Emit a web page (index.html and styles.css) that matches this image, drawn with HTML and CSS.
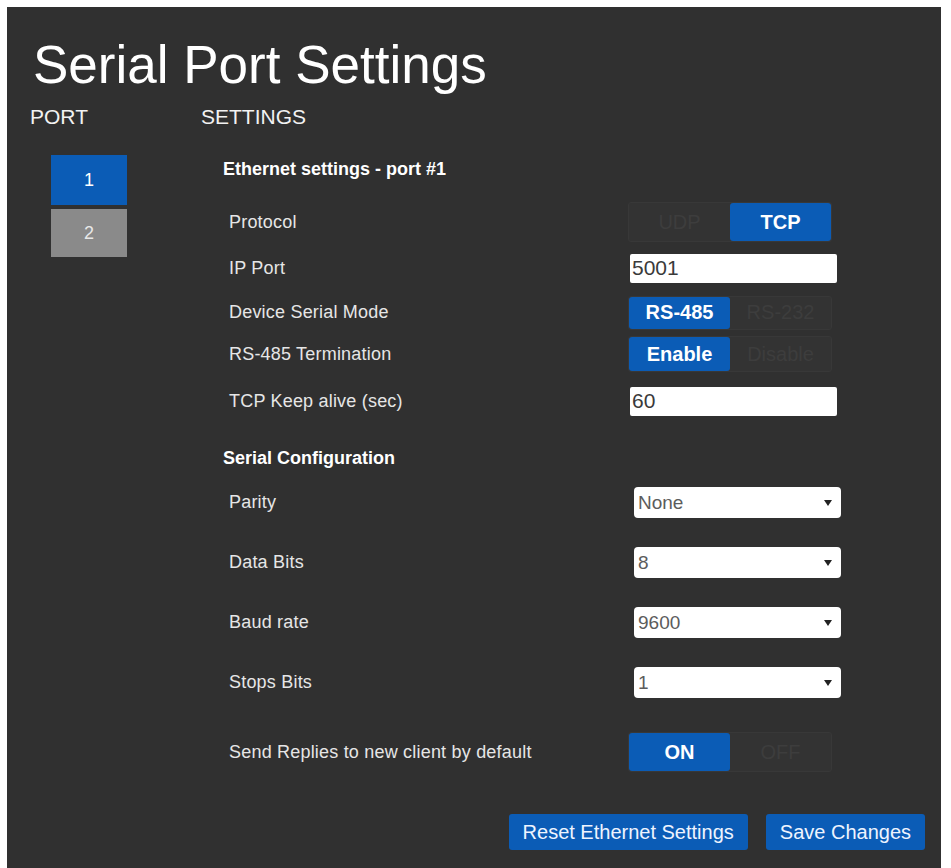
FILE: index.html
```html
<!DOCTYPE html>
<html lang="en">
<head>
    <meta charset="UTF-8">
    <meta name="viewport" content="width=device-width, initial-scale=1.0">
    <title>Serial Port Settings</title>
    <link rel="stylesheet" href="styles.css">
</head>
<body>
    <div class="panel">
        <h1 class="title">Serial Port Settings</h1>
        <div class="columns">
            <div class="port-col">
                <h2 class="col-head">PORT</h2>
                <div class="port-list">
                    <button class="port-btn active">1</button>
                    <button class="port-btn">2</button>
                </div>
            </div>
            <div class="settings-col">
                <h2 class="col-head">SETTINGS</h2>

                <h3 class="section-head">Ethernet settings - port #1</h3>
                <div class="fields first">
                    <div class="field">
                        <span class="label">Protocol</span>
                        <div class="toggle">
                            <span>UDP</span>
                            <span class="on">TCP</span>
                        </div>
                    </div>
                    <div class="field">
                        <span class="label">IP Port</span>
                        <input class="text-input" type="text" value="5001">
                    </div>
                    <div class="field f-43">
                        <span class="label">Device Serial Mode</span>
                        <div class="toggle slim">
                            <span class="on">RS-485</span>
                            <span>RS-232</span>
                        </div>
                    </div>
                    <div class="field f-40">
                        <span class="label">RS-485 Termination</span>
                        <div class="toggle mid">
                            <span class="on">Enable</span>
                            <span>Disable</span>
                        </div>
                    </div>
                    <div class="field f-54">
                        <span class="label">TCP Keep alive (sec)</span>
                        <input class="text-input" type="text" value="60">
                    </div>
                </div>

                <h3 class="section-head second">Serial Configuration</h3>
                <div class="fields">
                    <div class="field f-60">
                        <span class="label">Parity</span>
                        <div class="select">
                            <select><option>None</option><option>Odd</option><option>Even</option></select>
                        </div>
                    </div>
                    <div class="field f-60">
                        <span class="label">Data Bits</span>
                        <div class="select">
                            <select><option>8</option><option>7</option></select>
                        </div>
                    </div>
                    <div class="field f-60">
                        <span class="label">Baud rate</span>
                        <div class="select">
                            <select><option>9600</option><option>19200</option><option>115200</option></select>
                        </div>
                    </div>
                    <div class="field f-60">
                        <span class="label">Stops Bits</span>
                        <div class="select">
                            <select><option>1</option><option>2</option></select>
                        </div>
                    </div>
                    <div class="field f-60 replies">
                        <span class="label">Send Replies to new client by default</span>
                        <div class="toggle">
                            <span class="on">ON</span>
                            <span>OFF</span>
                        </div>
                    </div>
                </div>

                <div class="actions">
                    <button class="btn">Reset Ethernet Settings</button>
                    <button class="btn">Save Changes</button>
                </div>
            </div>
        </div>
    </div>
</body>
</html>
```

FILE: styles.css
```css
body {
    margin: 0;
    background-color: #fff;
    font-family: "Liberation Sans", Arial, sans-serif;
}

.panel {
    margin: 7px 0 0 7px;
    width: 934px;
    height: 861px;
    padding: 0 16px 0 23px;
    box-sizing: border-box;
    background-color: #303030;
    color: #fff;
    overflow: hidden;
}

.title {
    margin: 0;
    padding: 28px 0 0 3px;
    font-size: 53px;
    font-weight: normal;
    line-height: 60px;
}

.columns {
    display: flex;
    margin-top: 10px;
}

.col-head {
    margin: 0;
    font-size: 21px;
    font-weight: normal;
    line-height: 24px;
    color: #f2f2f2;
}

/* port selector */
.port-col {
    width: 171px;
    flex-shrink: 0;
}

.port-list {
    display: flex;
    flex-direction: column;
    gap: 4px;
    margin: 26px 0 0 21px;
}

.port-btn {
    width: 76px;
    height: 48px;
    border: 0;
    padding: 0;
    font-family: inherit;
    font-size: 18px;
    color: #e8e8e8;
    background-color: #8a8a8a;
}

.port-btn.active {
    height: 50px;
    color: #fff;
    background-color: #0b5cb6;
}

/* settings */
.settings-col {
    flex: 1;
}

.section-head {
    margin: 29px 0 0 22px;
    font-size: 18px;
    font-weight: bold;
    line-height: 22px;
}

.section-head.second {
    margin-top: 19px;
}

.fields {
    padding-left: 28px;
    margin-top: 3px;
}

.fields.first {
    margin-top: 19px;
}

.field {
    display: grid;
    grid-template-columns: 399px 1fr;
    align-items: center;
    height: 46px;
}

.f-43 { height: 43px; }
.f-40 { height: 40px; }
.f-54 { height: 54px; }
.f-60 { height: 60px; }

.field.replies {
    margin-top: 10px;
}

.label {
    font-size: 18px;
    letter-spacing: 0.2px;
    color: #e6e6e6;
}

.toggle {
    display: flex;
    width: 204px;
    height: 40px;
    box-sizing: border-box;
    border: 1px solid #383838;
    border-radius: 3px;
    background-color: #333;
}

.toggle.slim {
    height: 34px;
}

.toggle.mid {
    height: 36px;
}

.toggle span {
    flex: 1;
    display: flex;
    align-items: center;
    justify-content: center;
    font-size: 20px;
    color: #3d3d3d;
}

.toggle .on {
    background-color: #0b5cb6;
    border-radius: 3px;
    font-weight: bold;
    color: #fff;
}

.text-input {
    width: 207px;
    height: 29px;
    margin-left: 2px;
    padding: 0 2px;
    box-sizing: border-box;
    border: 0;
    border-radius: 2px;
    font-family: inherit;
    font-size: 21px;
    color: #3a3a3a;
    background-color: #fff;
}

.select {
    position: relative;
    width: 207px;
    height: 31px;
    margin-left: 6px;
}

.select select {
    appearance: none;
    -webkit-appearance: none;
    width: 100%;
    height: 100%;
    padding: 0 4px;
    border: 0;
    border-radius: 4px;
    background-color: #fff;
    font-family: inherit;
    font-size: 19px;
    color: #5c5c5c;
}

.select::after {
    content: "";
    position: absolute;
    right: 9px;
    top: 13px;
    border-left: 4px solid transparent;
    border-right: 4px solid transparent;
    border-top: 6px solid #222;
    pointer-events: none;
}

.actions {
    display: flex;
    justify-content: flex-end;
    gap: 18px;
    margin-top: 32px;
}

.btn {
    height: 36px;
    padding: 0 14px;
    border: 0;
    border-radius: 3px;
    font-family: inherit;
    font-size: 20px;
    color: #eef4ff;
    background-color: #0b5cb6;
}
```
